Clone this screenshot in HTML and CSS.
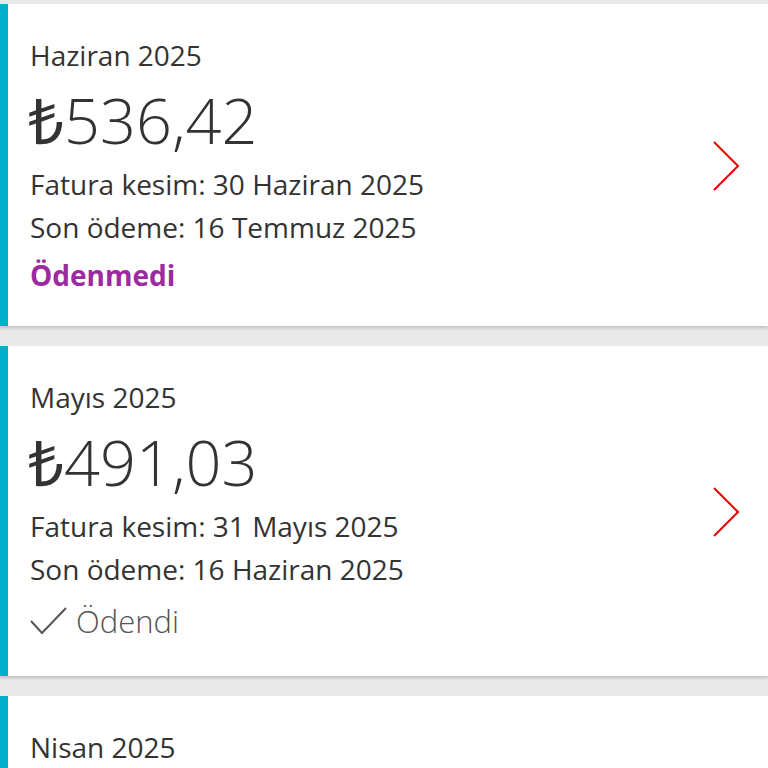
FILE: index.html
```html
<!DOCTYPE html>
<html lang="tr">
<head>
  <meta charset="UTF-8" />
  <title>Faturalarım</title>
  <link rel="stylesheet" href="styles.css">
</head>
<body>

  <div class="bill-list">

    <div class="bill">
      <div class="bill-info">
        <div class="bill-month">Haziran 2025</div>
        <div class="bill-amount">₺536,42</div>
        <div class="bill-line">Fatura kesim: 30 Haziran 2025</div>
        <div class="bill-line">Son ödeme: 16 Temmuz 2025</div>
        <div class="bill-status unpaid">Ödenmedi</div>
      </div>
      <svg class="chevron" width="32" height="56" viewBox="0 0 32 56">
        <path d="M4 4 L28 28 L4 52" fill="none" stroke="#e60000" stroke-width="2" />
      </svg>
    </div>

    <div class="bill">
      <div class="bill-info">
        <div class="bill-month">Mayıs 2025</div>
        <div class="bill-amount">₺491,03</div>
        <div class="bill-line">Fatura kesim: 31 Mayıs 2025</div>
        <div class="bill-line">Son ödeme: 16 Haziran 2025</div>
        <div class="bill-status paid">
          <svg width="38" height="30" viewBox="0 0 38 30">
            <path d="M1 15 L12 27 L36 2" fill="none" stroke="#555" stroke-width="2" />
          </svg>
          Ödendi
        </div>
      </div>
      <svg class="chevron" width="32" height="56" viewBox="0 0 32 56">
        <path d="M4 4 L28 28 L4 52" fill="none" stroke="#e60000" stroke-width="2" />
      </svg>
    </div>

    <div class="bill">
      <div class="bill-info">
        <div class="bill-month">Nisan 2025</div>
      </div>
    </div>

  </div>

</body>
</html>
```

FILE: styles.css
```css
body {
  font-family: 'Open Sans', sans-serif;
  background: #e9e9e9;
  color: #333;
  margin: 0;
  padding: 4px 0 0;
}

.bill-list {
  display: flex;
  flex-direction: column;
  gap: 20px;
}

.bill {
  display: flex;
  align-items: center;
  background: #fff;
  border-left: 8px solid #00b0ca;
  box-shadow: 0 2px 3px rgba(0, 0, 0, 0.18);
  padding: 29px 26px 28px 22px;
}

.bill-info {
  flex: 1;
}

.bill-month {
  font-size: 28px;
  line-height: 44px;
}

.bill-amount {
  font-size: 63px;
  font-weight: 300;
  line-height: 86px;
  margin-left: -2px;
}

.bill-line {
  font-size: 28px;
  line-height: 43px;
}

.bill-status {
  font-size: 28px;
  line-height: 46px;
  margin-top: 3px;
}

.unpaid {
  color: #9c2aa0;
  font-weight: bold;
}

.paid {
  display: flex;
  align-items: center;
  gap: 8px;
  color: #555;
  font-weight: 300;
  font-size: 31px;
  line-height: 54px;
}

.chevron {
  flex-shrink: 0;
}
```
